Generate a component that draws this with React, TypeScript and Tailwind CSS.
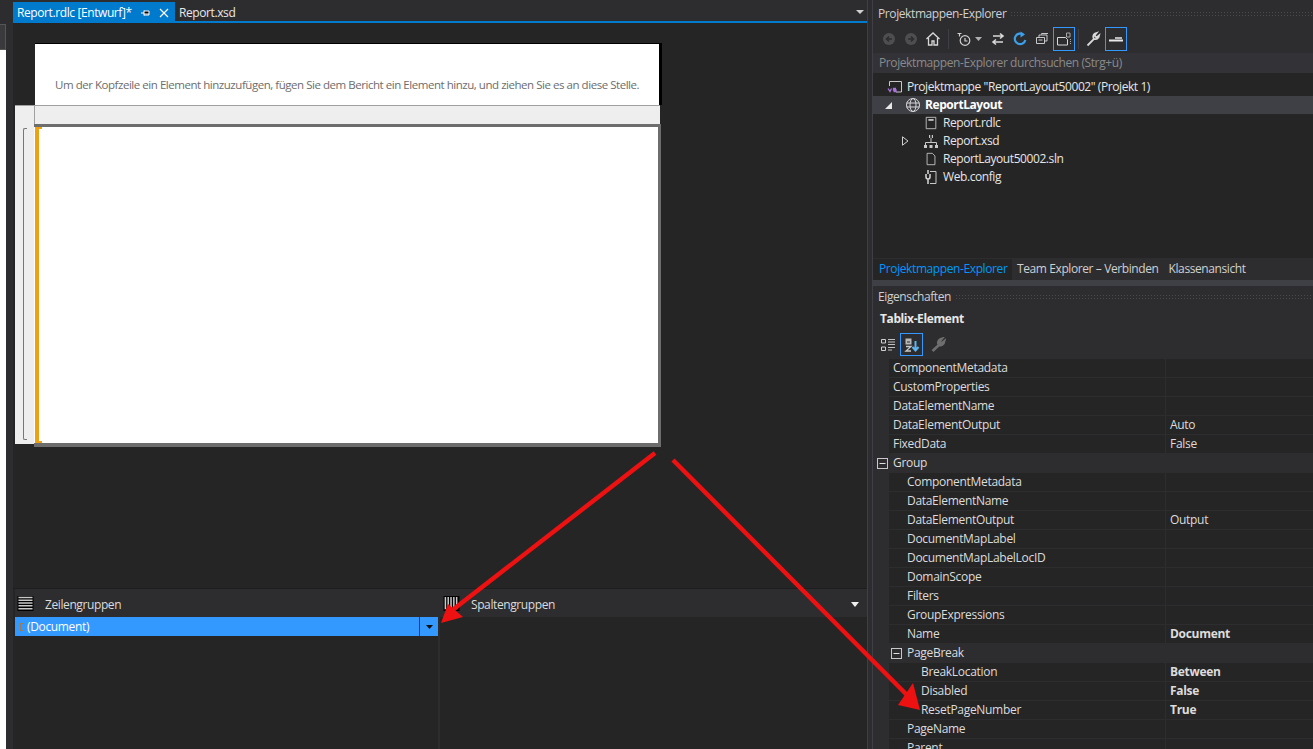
import type { ReactNode } from "react";

const font = "font-['Open_Sans','Noto_Sans',sans-serif]";

type PropRow = {
  name: string;
  value?: string;
  bold?: boolean;
  level?: number;
  box?: boolean;
  shaded?: boolean;
};

const props: PropRow[] = [
  { name: "ComponentMetadata" },
  { name: "CustomProperties" },
  { name: "DataElementName" },
  { name: "DataElementOutput", value: "Auto" },
  { name: "FixedData", value: "False" },
  { name: "Group", shaded: true, box: true },
  { name: "ComponentMetadata", level: 1 },
  { name: "DataElementName", level: 1 },
  { name: "DataElementOutput", value: "Output", level: 1 },
  { name: "DocumentMapLabel", level: 1 },
  { name: "DocumentMapLabelLocID", level: 1 },
  { name: "DomainScope", level: 1 },
  { name: "Filters", level: 1 },
  { name: "GroupExpressions", level: 1 },
  { name: "Name", value: "Document", bold: true, level: 1 },
  { name: "PageBreak", shaded: true, level: 1 },
  { name: "BreakLocation", value: "Between", bold: true, level: 2 },
  { name: "Disabled", value: "False", bold: true, level: 2 },
  { name: "ResetPageNumber", value: "True", bold: true, level: 2 },
  { name: "PageName", level: 1 },
  { name: "Parent", level: 1 },
];

function Icon({ size = 16, children }: { size?: number; children: ReactNode }) {
  return (
    <svg width={size} height={size} viewBox="0 0 16 16" fill="none" className="shrink-0">
      {children}
    </svg>
  );
}

function PlusMinusBox() {
  return (
    <svg width="11" height="11" viewBox="0 0 11 11" fill="none" className="shrink-0">
      <rect x="0.5" y="0.5" width="10" height="10" stroke="#c8c8c8" />
      <path d="M2.5 5.5h6" stroke="#e0e0e0" />
    </svg>
  );
}

function Grip() {
  return (
    <div className="h-[6px] flex-1 bg-[radial-gradient(#4a4a4e_0.8px,transparent_0.8px)] bg-[length:3px_3px]" />
  );
}

function ToolbarButton({ active, children }: { active?: boolean; children: ReactNode }) {
  return (
    <div
      className={`flex h-[24px] w-[22px] items-center justify-center border ${
        active ? "border-[#3399ff]" : "border-transparent"
      }`}
    >
      {children}
    </div>
  );
}

function ExplorerToolbar() {
  return (
    <div className="flex h-[28px] items-center pl-[5px]">
      <ToolbarButton>
        <Icon>
          <circle cx="8" cy="8" r="6" fill="#4e4e50" />
          <path d="M11 8H6M8 5.5 5.5 8 8 10.5" stroke="#2d2d30" strokeWidth="1.5" />
        </Icon>
      </ToolbarButton>
      <ToolbarButton>
        <Icon>
          <circle cx="8" cy="8" r="6" fill="#4e4e50" />
          <path d="M5 8h5M8 5.5 10.5 8 8 10.5" stroke="#2d2d30" strokeWidth="1.5" />
        </Icon>
      </ToolbarButton>
      <ToolbarButton>
        <Icon>
          <path d="M1.5 8 8 2l6.5 6M3.5 7v7h3.5v-4h2v4h3.5V7" stroke="#d8d8d8" strokeWidth="1.3" />
        </Icon>
      </ToolbarButton>
      <div className="mx-[4px] h-[20px] w-px bg-[#3f3f46]" />
      <ToolbarButton>
        <Icon>
          <circle cx="9" cy="9.5" r="4.8" stroke="#d0d0d0" strokeWidth="1.2" />
          <path d="M9 7v3h2.5M1.5 2.5h4M3.5 2.5v3" stroke="#d0d0d0" strokeWidth="1.2" />
        </Icon>
      </ToolbarButton>
      <svg width="7" height="4" viewBox="0 0 7 4" className="mr-[5px] shrink-0">
        <path d="M0 0h7L3.5 4z" fill="#b0b0b0" />
      </svg>
      <ToolbarButton>
        <Icon>
          <path d="M3 5h10M10 2.5 13 5l-3 2.5M13 11H3M6 8.5 3 11l3 2.5" stroke="#d8d8d8" strokeWidth="1.6" />
        </Icon>
      </ToolbarButton>
      <ToolbarButton>
        <Icon>
          <path d="M11.5 3.8A5.3 5.3 0 1 0 13.3 9" stroke="#3c9fe8" strokeWidth="2.2" />
          <path d="M8.5 0.5v6l4.5-3z" fill="#3c9fe8" />
        </Icon>
      </ToolbarButton>
      <ToolbarButton>
        <Icon>
          <path d="M2.5 6.5h8v6h-8zM5 6V4h8v6h-2M7.5 3.5v-1h6.5" stroke="#c8c8c8" />
          <path d="M4.5 9h4" stroke="#c8c8c8" />
        </Icon>
      </ToolbarButton>
      <ToolbarButton active>
        <Icon>
          <path d="M1.5 6.5h8l2 2v5.5h-10z" stroke="#d8d8d8" />
          <path d="M10.5 2h3.5v4h-3.5z" stroke="#a8a8a8" />
          <path d="M14.5 8v6" stroke="#a8a8a8" strokeDasharray="1 1" />
        </Icon>
      </ToolbarButton>
      <div className="mx-[3px] h-[20px] w-px bg-[#3f3f46]" />
      <ToolbarButton>
        <Icon>
          <path d="M2.5 14.5 9 8a3.8 3.8 0 0 1 1-5.5l1.5-.5-2 2.5 2 2 2.5-2-.5 1.8A3.8 3.8 0 0 1 9 7.8" stroke="#d8d8d8" strokeWidth="1.8" />
        </Icon>
      </ToolbarButton>
      <div className="ml-px">
        <ToolbarButton active>
          <Icon>
            <path d="M1 9.5h14" stroke="#e8e8e8" strokeWidth="2" />
            <path d="M7 7h7" stroke="#b8b8b8" strokeWidth="2" />
          </Icon>
        </ToolbarButton>
      </div>
    </div>
  );
}

function TreeRow({
  label,
  icon,
  iconLeft,
  arrow,
  arrowLeft = 0,
  selected,
  bold,
}: {
  label: string;
  icon: ReactNode;
  iconLeft: number;
  arrow?: ReactNode;
  arrowLeft?: number;
  selected?: boolean;
  bold?: boolean;
}) {
  return (
    <div className={`flex h-[18px] items-center ${selected ? "bg-[#3f3f46]" : ""}`}>
      <div style={{ width: iconLeft, paddingLeft: arrowLeft }} className="flex shrink-0 items-center">
        {arrow}
      </div>
      <div className="flex w-[16px] shrink-0 justify-center">{icon}</div>
      <span className={`ml-[4px] whitespace-nowrap text-[12px] leading-[18px] tracking-[-0.42px] text-[#e6e6e6] ${bold ? "font-bold text-white" : ""}`}>
        {label}
      </span>
    </div>
  );
}

function PropertyRows() {
  return (
    <div className="flex-1 overflow-hidden">
      {props.map((row, i) => {
        const level = row.level ?? 0;
        const nameLeft = level === 2 ? "pl-[32px]" : level === 1 ? "pl-[18px]" : "pl-[4px]";
        const isPageBreak = row.name === "PageBreak";
        return (
          <div key={i} className="flex h-[19px]">
            <div className="flex w-[16px] shrink-0 items-center justify-center bg-[#2d2d30] pl-[3px]">
              {row.box && <PlusMinusBox />}
            </div>
            <div
              className={`flex w-[277px] shrink-0 items-center border-b border-r border-[#2d2d30] ${
                isPageBreak ? "pl-[2px]" : nameLeft
              } ${row.shaded ? "bg-[#2d2d30]" : "bg-[#252526]"}`}
            >
              {isPageBreak && (
                <div className="mr-[5px] flex">
                  <PlusMinusBox />
                </div>
              )}
              <span className="whitespace-nowrap text-[12px] tracking-[-0.3px] text-[#dcdcdc]">{row.name}</span>
            </div>
            <div className={`flex flex-1 items-center border-b border-[#2d2d30] pl-[4px] ${row.shaded ? "bg-[#2d2d30]" : "bg-[#252526]"}`}>
              {row.value && (
                <span className={`text-[12px] tracking-[-0.3px] text-[#dcdcdc] ${row.bold ? "font-bold" : ""}`}>{row.value}</span>
              )}
            </div>
          </div>
        );
      })}
    </div>
  );
}

function RightPanel() {
  return (
    <div className="flex w-[440px] shrink-0 flex-col bg-[#2d2d30]">
      {/* Projektmappen-Explorer */}
      <div className="flex h-[25px] items-center gap-[4px] pl-[5px] pt-[2px]">
        <span className="text-[12px] tracking-[-0.4px] text-[#d0d0d0]">Projektmappen-Explorer</span>
        <Grip />
      </div>
      <ExplorerToolbar />
      <div className="flex h-[20px] items-center bg-[#333337] pl-[6px]">
        <span className="text-[12px] tracking-[-0.4px] text-[#8a8a8a]">Projektmappen-Explorer durchsuchen (Strg+ü)</span>
      </div>
      <div className="h-[185px] bg-[#252526] pt-[5px]">
        <TreeRow
          label={'Projektmappe "ReportLayout50002" (Projekt 1)'}
          iconLeft={14}
          icon={
            <Icon>
              <path d="M2.5 7V2.5h12v10.5H9" stroke="#c8c8c8" />
              <path d="M1 9.5l2 3 1.5-3M9 9.5H6.5v1.5H9v1.5H6.5" stroke="#a874d8" strokeWidth="1.3" />
            </Icon>
          }
        />
        <TreeRow
          label="ReportLayout"
          iconLeft={32}
          selected
          bold
          arrowLeft={12}
          arrow={
            <svg width="7" height="7" viewBox="0 0 7 7">
              <path d="M7 0v7H0z" fill="#e8e8e8" />
            </svg>
          }
          icon={
            <Icon>
              <circle cx="8" cy="8" r="6.5" stroke="#d8d8d8" />
              <ellipse cx="8" cy="8" rx="3" ry="6.5" stroke="#d8d8d8" />
              <path d="M1.5 6h13M1.5 10h13" stroke="#d8d8d8" />
            </Icon>
          }
        />
        <TreeRow
          label="Report.rdlc"
          iconLeft={50}
          icon={
            <Icon size={14}>
              <path d="M2.5 1.5h11v13h-11z" stroke="#c8c8c8" />
              <path d="M5 4.5h6" stroke="#c8c8c8" strokeWidth="2" />
            </Icon>
          }
        />
        <TreeRow
          label="Report.xsd"
          iconLeft={50}
          arrowLeft={29}
          arrow={
            <svg width="7" height="10" viewBox="0 0 7 10">
              <path d="M.5.8v8.4L6 5z" stroke="#d0d0d0" fill="none" />
            </svg>
          }
          icon={
            <Icon>
              <path d="M8 5v4M2.5 12V9.5h11V12" stroke="#c8c8c8" />
              <path d="M6 2h1.2v3H6zM8.8 2H10v3H8.8zM1 12h3v3H1zM6.5 12h3v3h-3zM12 12h3v3h-3z" fill="#c8c8c8" />
            </Icon>
          }
        />
        <TreeRow
          label="ReportLayout50002.sln"
          iconLeft={50}
          icon={
            <Icon size={14}>
              <path d="M3.5 1.5h6l3 3v10h-9z" stroke="#c8c8c8" />
            </Icon>
          }
        />
        <TreeRow
          label="Web.config"
          iconLeft={50}
          icon={
            <Icon>
              <path d="M7 2.5h6v12H7" stroke="#c8c8c8" />
              <path d="M3 5v3a2 2 0 0 0 4 0V5M5 1v4M5 10v5" stroke="#d8d8d8" strokeWidth="1.5" />
            </Icon>
          }
        />
      </div>
      {/* tabs */}
      <div className="flex h-[22px] items-center bg-[#2d2d30]">
        <div className="flex h-[21px] w-[139px] items-center bg-[#252526] pl-[6px]">
          <span className="text-[12px] tracking-[-0.4px] text-[#0097fb]">Projektmappen-Explorer</span>
        </div>
        <span className="ml-[5px] text-[12px] tracking-[-0.4px] text-[#d0d0d0]">Team Explorer – Verbinden</span>
        <span className="ml-[10px] text-[12px] tracking-[-0.4px] text-[#d0d0d0]">Klassenansicht</span>
      </div>
      <div className="h-[6px] bg-[#3f3f46]" />
      {/* Eigenschaften */}
      <div className="flex h-[22px] items-center gap-[4px] pl-[5px]">
        <span className="text-[12px] tracking-[-0.4px] text-[#d0d0d0]">Eigenschaften</span>
        <Grip />
      </div>
      <div className="flex h-[22px] items-center pl-[7px]">
        <span className="text-[12px] font-bold tracking-[-0.4px] text-[#e8e8e8]">Tablix-Element</span>
      </div>
      <div className="flex h-[29px] items-center gap-px pl-[4px]">
        <div className="flex h-[22px] w-[22px] items-center justify-center">
          <Icon>
            <path d="M1.5 2.5h4v3.5h-4zM1.5 10h4v3.5h-4z" stroke="#d0d0d0" />
            <path d="M8 2.5h7M8 5h7M8 7.5h7M8 10.5h7M8 13h4" stroke="#c0c0c0" />
          </Icon>
        </div>
        <div className="flex h-[23px] w-[23px] items-center justify-center border border-[#3399ff]">
          <Icon>
            <path d="M1.5 1.5h6v6h-6z" fill="#b8b8b8" />
            <path d="M3 5h3" stroke="#2d2d30" />
            <path d="M2 9.5h5L2 14h5" stroke="#c8c8c8" strokeWidth="1.3" />
            <path d="M11.5 4v9M8.5 10l3 3.5 3-3.5" stroke="#5cb4f0" strokeWidth="2" />
          </Icon>
        </div>
        <div className="ml-[3px] flex h-[22px] w-[22px] items-center justify-center">
          <Icon>
            <path d="M2.5 14 9 8a3.8 3.8 0 0 1 1-5.5l1.5-.5-2 2.5 2 2 2.5-2-.5 1.8A3.8 3.8 0 0 1 9 7.8" stroke="#6e6e6e" strokeWidth="2.6" />
          </Icon>
        </div>
      </div>
      <PropertyRows />
    </div>
  );
}

function Designer() {
  return (
    <div className="h-[565px] shrink-0 bg-[#252526] pl-[2px] pt-[20px]">
      {/* Kopfzeile */}
      <div className="ml-[20px] flex h-[62px] w-[627px] items-end border-r-[3px] border-t border-black bg-white pb-[12px] pl-[20px]">
        <span className="whitespace-nowrap text-[11.5px] tracking-[-0.46px] text-[#6d6d6d]">
          Um der Kopfzeile ein Element hinzuzufügen, fügen Sie dem Bericht ein Element hinzu, und ziehen Sie es an diese Stelle.
        </span>
      </div>
      <div className="flex h-[19px] w-[645px] border-t border-[#a0a0a0] bg-[#eeeeee]">
        <div className="h-full w-[20px] border-r border-[#a0a0a0]" />
      </div>
      <div className="flex">
        <div className="flex h-[320px] w-[19px] shrink-0 flex-col bg-[#eeeeee] py-[4px] pl-[8px]">
          <div className="h-full w-[4px] rounded-tl-[2px] rounded-bl-[2px] border-y border-l border-[#777]" />
        </div>
        <div className="h-[323px] w-[627px] border-y-[3px] border-r-[3px] border-b-[4px] border-[#6d6d6d] bg-white pl-px">
          <div className="flex h-full flex-col justify-between border-l-[4px] border-[#eba313]">
            <div className="h-[2px] w-[3px] bg-[#eba313]" />
            <div className="h-[2px] w-[3px] bg-[#eba313]" />
          </div>
        </div>
      </div>
    </div>
  );
}

function GroupsPanel() {
  return (
    <div className="flex flex-1 border-t border-[#1e1e1e]">
      <div className="w-[425px] shrink-0 bg-[#252526] pl-[2px]">
        <div className="flex h-[28px] items-center gap-[11px] bg-[#2d2d30] pl-[2px]">
          <svg width="17" height="15" viewBox="0 0 17 16" className="shrink-0">
            <rect width="17" height="16" fill="#000" />
            <path d="M1 1.5h15M1 4.5h15M1 7.5h15M1 10.5h15M1 13.5h15" stroke="#c8c8c8" strokeWidth="1.6" />
          </svg>
          <span className="mt-[4px] text-[12px] tracking-[-0.4px] text-[#dcdcdc]">Zeilengruppen</span>
        </div>
        <div className="flex h-[19px] w-[423px] items-center bg-[#3399ff]">
          <span className="ml-[5px] mr-[3px] h-[8px] w-[3px] border-y border-l border-[#a07a50]" />
          <span className="ml-px flex-1 text-[12px] tracking-[-0.35px] text-white">(Document)</span>
          <div className="flex h-full w-[19px] items-center justify-center border-l border-[#1e3a5a]">
            <svg width="7" height="4" viewBox="0 0 7 4">
              <path d="M0 0h7L3.5 4z" fill="#111" />
            </svg>
          </div>
        </div>
      </div>
      <div className="w-[2px] shrink-0 bg-[#2d2d30]" />
      <div className="flex-1 bg-[#252526]">
        <div className="flex h-[28px] items-center bg-[#2d2d30] pl-[3px]">
          <svg width="17" height="15" viewBox="0 0 17 16" className="shrink-0">
            <rect width="17" height="16" fill="#000" />
            <path d="M2 1v13M5 1v13M8 1v13M11 1v13M14 1v13" stroke="#c8c8c8" strokeWidth="1.6" />
          </svg>
          <span className="ml-[11px] mt-[4px] flex-1 text-[12px] tracking-[-0.4px] text-[#dcdcdc]">Spaltengruppen</span>
          <svg width="8" height="5" viewBox="0 0 8 5" className="mr-[8px] mt-[2px]">
            <path d="M0 0h8L4 5z" fill="#f0f0f0" />
          </svg>
        </div>
      </div>
    </div>
  );
}

export default function App() {
  return (
    <div className={`relative flex h-[749px] w-[1313px] overflow-hidden bg-[#2d2d30] ${font}`}>
      {/* remains of the neighbouring window */}
      <div className="flex w-[6px] shrink-0 flex-col">
        <div className="h-[24px]" />
        <div className="h-[26px] border-y border-r border-[#555] bg-[#3a3a3d]" />
        <div className="flex-1 bg-white" />
      </div>
      <div className="w-[7px] shrink-0 bg-[#2d2d30]" />

      {/* Editor */}
      <div className="flex w-[854px] shrink-0 flex-col">
        <div className="h-[2px]" />
        <div className="flex h-[19px] items-center">
          <div className="flex h-[19px] w-[162px] items-center bg-[#007acc] pl-[4px] pt-[2px]">
            <span className="whitespace-nowrap text-[12px] tracking-[-0.4px] text-white">Report.rdlc [Entwurf]*</span>
            <svg width="10" height="10" viewBox="0 0 10 10" className="ml-[9px] shrink-0">
              <path d="M0 5h3M3 2.5v5M3 3h5v4H3M3 6h5" stroke="#fff" />
            </svg>
            <svg width="10" height="10" viewBox="0 0 10 10" className="ml-[8px] shrink-0">
              <path d="M1 1l8 8M9 1l-8 8" stroke="#fff" strokeWidth="1.2" />
            </svg>
          </div>
          <span className="ml-[4px] mt-[2px] flex-1 text-[12px] tracking-[-0.4px] text-[#e8e8e8]">Report.xsd</span>
          <svg width="8" height="4" viewBox="0 0 8 4" className="mr-[3px]">
            <path d="M0 0h8L4 4z" fill="#d0d0d0" />
          </svg>
        </div>
        <div className="h-[2px] bg-[#007acc]" />
        <Designer />
        <GroupsPanel />
      </div>

      {/* Splitter */}
      <div className="flex w-[6px] shrink-0 justify-between bg-[#2d2d30]">
        <div className="w-px bg-[#3f3f46]" />
        <div className="w-px bg-[#3f3f46]" />
      </div>

      <RightPanel />

      {/* Annotation arrows */}
      <svg width="1313" height="749" viewBox="0 0 1313 749" className="pointer-events-none absolute left-0 top-0">
        <path d="M655 453 450 612" stroke="#ee1111" strokeWidth="4.5" />
        <path d="M441 623 448 604 463 617z" fill="#ee1111" />
        <path d="M673 460 908 696" stroke="#ee1111" strokeWidth="4.5" />
        <path d="M920 710 898 705 913 683z" fill="#ee1111" />
      </svg>
    </div>
  );
}
